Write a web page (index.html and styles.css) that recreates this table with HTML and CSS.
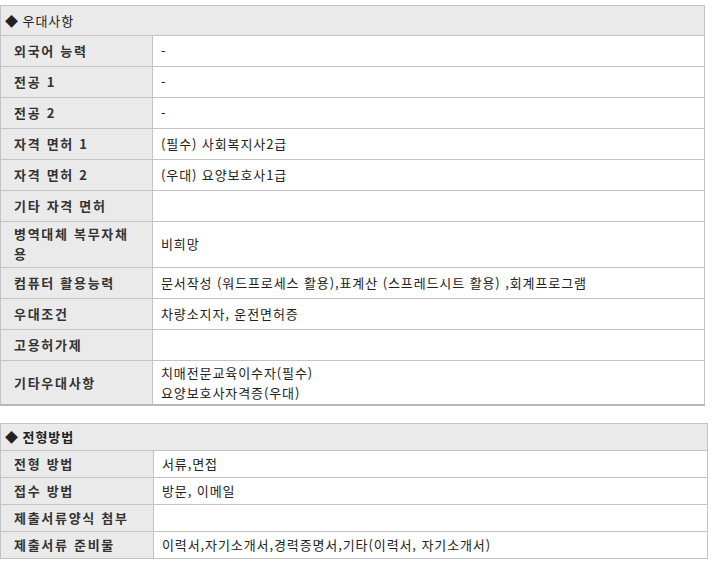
FILE: index.html
```html
<!DOCTYPE html>
<html lang="ko">
<head>
<meta charset="utf-8">
<link rel="stylesheet" href="styles.css">
</head>
<body>
<table class="info info-a">
  <colgroup><col class="c-label"><col></colgroup>
  <tr class="head"><th colspan="2"><span class="dia">◆</span> 우대사항</th></tr>
  <tr><td class="lbl">외국어 능력</td><td class="val">-</td></tr>
  <tr><td class="lbl">전공 1</td><td class="val">-</td></tr>
  <tr><td class="lbl">전공 2</td><td class="val">-</td></tr>
  <tr><td class="lbl">자격 면허 1</td><td class="val">(필수) 사회복지사2급</td></tr>
  <tr><td class="lbl">자격 면허 2</td><td class="val">(우대) 요양보호사1급</td></tr>
  <tr><td class="lbl">기타 자격 면허</td><td class="val"></td></tr>
  <tr class="multi"><td class="lbl">병역대체 복무자채용</td><td class="val">비희망</td></tr>
  <tr><td class="lbl">컴퓨터 활용능력</td><td class="val">문서작성 (워드프로세스 활용),표계산 (스프레드시트 활용) ,회계프로그램</td></tr>
  <tr><td class="lbl">우대조건</td><td class="val">차량소지자, 운전면허증</td></tr>
  <tr><td class="lbl">고용허가제</td><td class="val"></td></tr>
  <tr class="multi last"><td class="lbl">기타우대사항</td><td class="val">치매전문교육이수자(필수)<br>요양보호사자격증(우대)</td></tr>
</table>

<table class="info info-b">
  <colgroup><col class="c-label"><col></colgroup>
  <tr class="head"><th colspan="2"><span class="dia">◆</span> 전형방법</th></tr>
  <tr><td class="lbl">전형 방법</td><td class="val">서류,면접</td></tr>
  <tr><td class="lbl">접수 방법</td><td class="val">방문, 이메일</td></tr>
  <tr><td class="lbl">제출서류양식 첨부</td><td class="val"></td></tr>
  <tr><td class="lbl">제출서류 준비물</td><td class="val">이력서,자기소개서,경력증명서,기타(이력서, 자기소개서)</td></tr>
</table>
</body>
</html>
```

FILE: styles.css
```css
html, body {
  margin: 0;
  padding: 0;
  background: #ffffff;
}
body {
  padding-top: 5px;
  font-family: "Noto Sans CJK KR", "Noto Sans", sans-serif;
  font-size: 13px;
  color: #222;
}
.info {
  border-collapse: collapse;
  table-layout: fixed;
}
.info th, .info td {
  border: 1px solid #c4c4c4;
  line-height: 20px;
  padding: 0;
  text-align: left;
  vertical-align: middle;
}
.info-a { width: 705px; }
.info-b { width: 708px; margin-top: 17px; }
.info-a .c-label { width: 152px; }
.info-b .c-label { width: 153px; }
.info .head th {
  background: #eaeaea;
  font-weight: normal;
  padding-left: 4px;
  letter-spacing: 0.9px;
  color: #222;
}
.info-a .head th { height: 29px; }
.info-b .head th { height: 26px; font-weight: bold; }
.dia { font-size: 13px; letter-spacing: 0; }
.info .lbl {
  background: #eaeaea;
  font-weight: bold;
  padding-left: 13px;
  padding-right: 18px;
  letter-spacing: 1.7px;
  color: #333;
}
.info .val {
  padding-left: 8px;
  background: #fff;
  letter-spacing: 0.9px;
  color: #222;
}
.info-a td { height: 30px; }
.info-b td { height: 26px; }
.info .multi td {
  padding-top: 2px;
  padding-bottom: 3px;
}
.info .multi.last td {
  padding-top: 2px;
  padding-bottom: 1px;
  border-bottom: 2px solid #b8b8b8;
}
```
